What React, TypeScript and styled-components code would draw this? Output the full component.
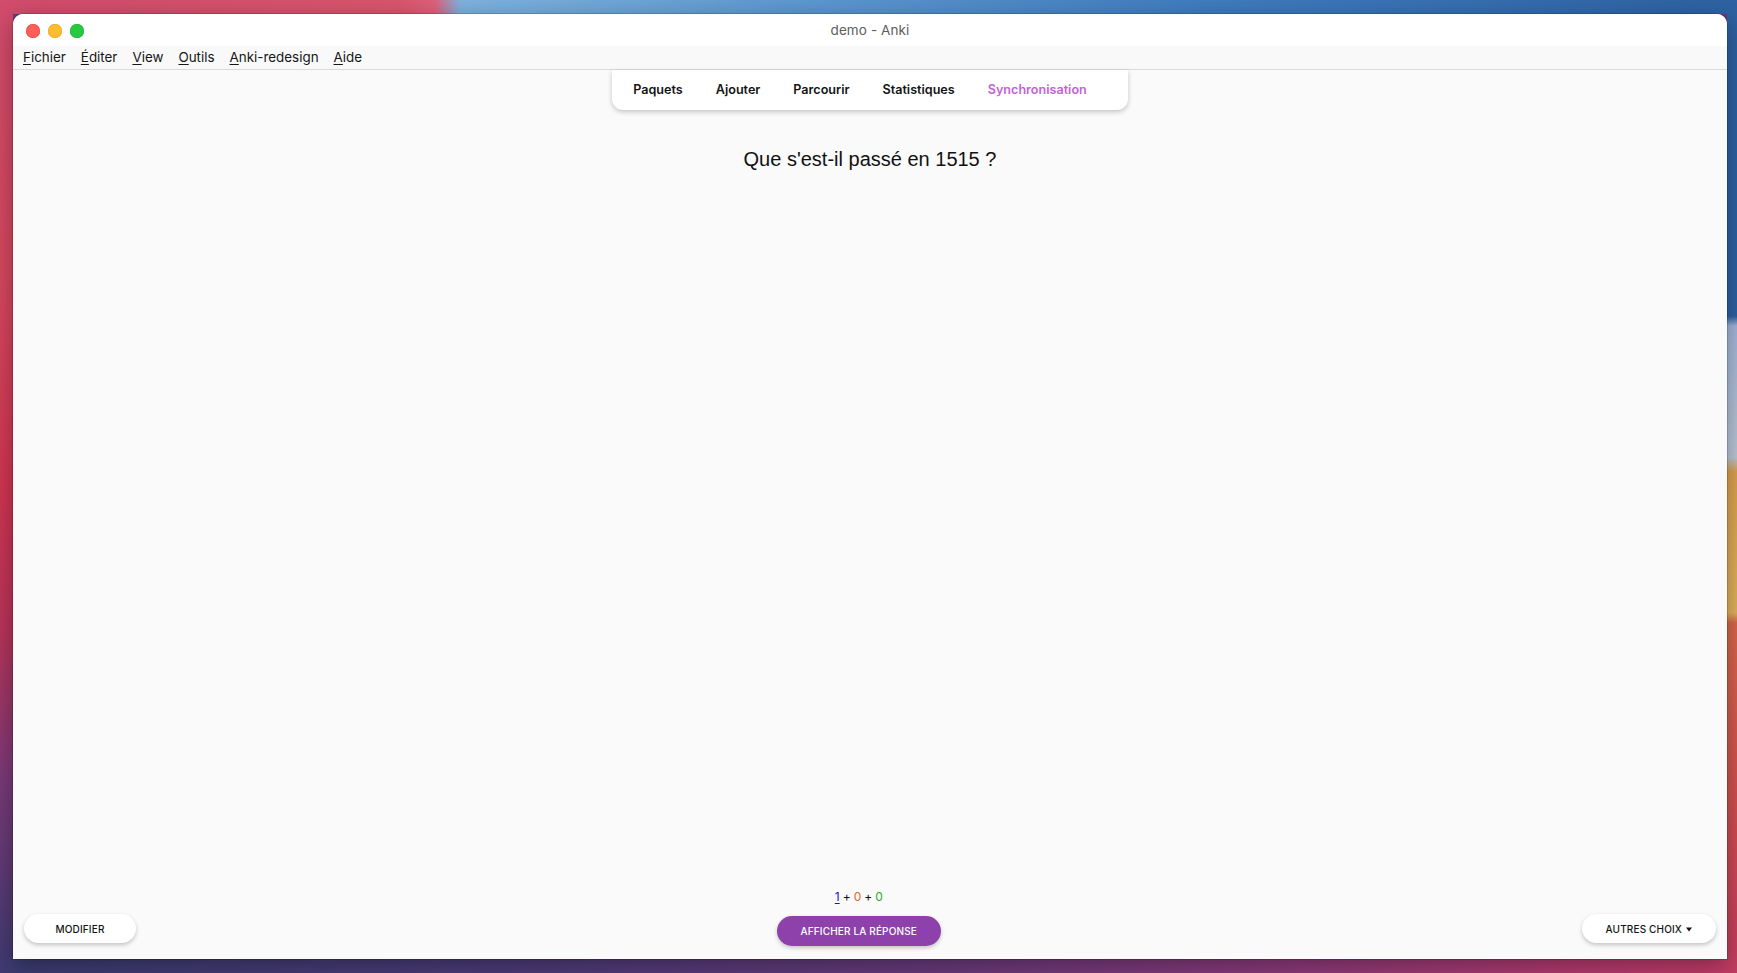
import React from 'react';
import styled, { createGlobalStyle } from 'styled-components';

const Global = createGlobalStyle`
  html, body { margin: 0; padding: 0; }
  body {
    width: 1737px;
    height: 973px;
    overflow: hidden;
    font-family: Inter, "Noto Sans", sans-serif;
    -webkit-font-smoothing: antialiased;
  }
  * { box-sizing: border-box; }
`;

const Desktop = styled.div`
  width: 1737px;
  height: 973px;
  padding: 14px 10px 14px 13px;
  background:
    linear-gradient(to right, #d24c6c 0%, #d9566e 23%, #e0607a 25%, #7eb2df 26.5%, #5f9ad2 45%, #3f7cbf 70%, #2d62a3 100%) top left / 100% 14px no-repeat,
    linear-gradient(to bottom, #2d62a3 0%, #2d62a3 32.5%, #a3b6db 33.5%, #bcc7d6 47%, #dca24e 48.5%, #e2b35c 63%, #d8694a 64%, #cf4d50 85%, #c33c62 100%) top right / 10px 100% no-repeat,
    linear-gradient(to bottom, #d24c6c 0%, #d6475e 30%, #d23552 50%, #b8345a 65%, #7a3a78 80%, #3e3b72 100%) top left / 13px 100% no-repeat,
    linear-gradient(to right, #3b3c72 0%, #4c3b78 30%, #6a3a7c 55%, #8e3a7a 75%, #b23a70 90%, #c23c66 100%) bottom left / 100% 14px no-repeat,
    #6a3a7c;
`;

const Window = styled.div`
  width: 1714px;
  height: 945px;
  display: flex;
  flex-direction: column;
  background: #fafafa;
  border-radius: 10px 10px 0 0;
  overflow: hidden;
  box-shadow: 0 0 0 0.5px rgba(0, 0, 0, 0.3), 0 6px 24px rgba(0, 0, 0, 0.35);
`;

const TitleBar = styled.div`
  height: 32px;
  flex: none;
  background: #ffffff;
  display: grid;
  grid-template-columns: 1fr auto 1fr;
  align-items: center;
  padding: 0 13px;
`;

const Lights = styled.div`
  display: flex;
  gap: 8px;
  padding-top: 1px;
`;

const Light = styled.span<{ $color: string; $ring: string }>`
  width: 14px;
  height: 14px;
  border-radius: 50%;
  background: ${(p) => p.$color};
  box-shadow: inset 0 0 0 0.5px ${(p) => p.$ring};
`;

const Title = styled.div`
  font-size: 13.5px;
  color: #5c5c5c;
  letter-spacing: 0.1px;
`;

const MenuBar = styled.nav`
  height: 24px;
  flex: none;
  background: #f9f9f9;
  border-bottom: 1px solid #dadada;
  display: flex;
  align-items: center;
  gap: 15px;
  padding: 0 10px 1px;
`;

const MenuItem = styled.span`
  font-size: 13.4px;
  color: #161616;
  u {
    text-decoration: underline;
    text-decoration-thickness: 1px;
    text-underline-offset: 2px;
  }
`;

const Main = styled.main`
  flex: 1;
  display: flex;
  flex-direction: column;
  align-items: center;
  min-height: 0;
`;

const TabCard = styled.div`
  height: 40px;
  display: flex;
  align-items: center;
  gap: 33px;
  padding: 0 41px 1px 21px;
  background: #ffffff;
  border-radius: 0 0 11px 11px;
  box-shadow: 0 2px 5px rgba(0, 0, 0, 0.22);
`;

const Tab = styled.span<{ $active?: boolean }>`
  font-size: 12.6px;
  font-weight: 600;
  color: ${(p) => (p.$active ? '#c462d4' : '#141414')};
`;

const Question = styled.div`
  margin-top: 38px;
  font-family: "Liberation Sans", Arial, sans-serif;
  font-size: 20px;
  line-height: 23px;
  color: #111111;
`;

const Spacer = styled.div`
  flex: 1;
`;

const BottomBar = styled.footer`
  align-self: stretch;
  display: flex;
  align-items: flex-end;
  padding: 0 11px 13px;
`;

const Side = styled.div`
  padding-bottom: 3px;
`;

const Center = styled.div`
  flex: 1;
  display: flex;
  flex-direction: column;
  align-items: center;
  gap: 11px;
`;

const Counts = styled.div`
  font-size: 12px;
  line-height: 16px;
  color: #111;
  display: flex;
  gap: 3px;
`;

const Count = styled.span<{ $color: string; $underline?: boolean }>`
  color: ${(p) => p.$color};
  text-decoration: ${(p) => (p.$underline ? 'underline' : 'none')};
  text-underline-offset: 2px;
`;

const Pill = styled.button<{ $primary?: boolean; $minWidth?: number }>`
  height: ${(p) => (p.$primary ? 30 : 29)}px;
  min-width: ${(p) => p.$minWidth ?? 0}px;
  padding: 0 24px;
  border: none;
  border-radius: 15px;
  font-family: Inter, "Noto Sans", sans-serif;
  font-size: 10px;
  font-weight: 500;
  letter-spacing: 0.15px;
  text-transform: uppercase;
  color: ${(p) => (p.$primary ? '#ffffff' : '#141414')};
  background: ${(p) => (p.$primary ? '#8e41aa' : '#ffffff')};
  box-shadow: 0 2px 4px rgba(0, 0, 0, 0.22);
  display: flex;
  align-items: center;
  justify-content: center;
  gap: 4px;
`;

const Caret = styled.svg`
  width: 6px;
  height: 5px;
  display: block;
  margin-top: 1px;
`;

const menu = ['Fichier', 'Éditer', 'View', 'Outils', 'Anki-redesign', 'Aide'];
const tabs = ['Paquets', 'Ajouter', 'Parcourir', 'Statistiques', 'Synchronisation'];

export default function App() {
  return (
    <>
      <Global />
      <Desktop>
        <Window>
          <TitleBar>
            <Lights>
              <Light $color="#fe5f57" $ring="#e0443e" />
              <Light $color="#febc2e" $ring="#dea123" />
              <Light $color="#28c840" $ring="#1aab29" />
            </Lights>
            <Title>demo - Anki</Title>
            <span />
          </TitleBar>
          <MenuBar>
            {menu.map((m) => (
              <MenuItem key={m}>
                <u>{m[0]}</u>
                {m.slice(1)}
              </MenuItem>
            ))}
          </MenuBar>
          <Main>
            <TabCard>
              {tabs.map((t) => (
                <Tab key={t} $active={t === 'Synchronisation'}>
                  {t}
                </Tab>
              ))}
            </TabCard>
            <Question>Que s'est-il passé en 1515 ?</Question>
            <Spacer />
            <BottomBar>
              <Side>
                <Pill $minWidth={112}>Modifier</Pill>
              </Side>
              <Center>
                <Counts>
                  <Count $color="#1a1aa6" $underline>1</Count>
                  <span>+</span>
                  <Count $color="#d8692d">0</Count>
                  <span>+</span>
                  <Count $color="#22b022">0</Count>
                </Counts>
                <Pill $primary>Afficher la réponse</Pill>
              </Center>
              <Side>
                <Pill>
                  Autres choix
                  <Caret viewBox="0 0 6 5">
                    <path d="M0 0.5 H6 L3 4.5 Z" fill="#141414" />
                  </Caret>
                </Pill>
              </Side>
            </BottomBar>
          </Main>
        </Window>
      </Desktop>
    </>
  );
}
